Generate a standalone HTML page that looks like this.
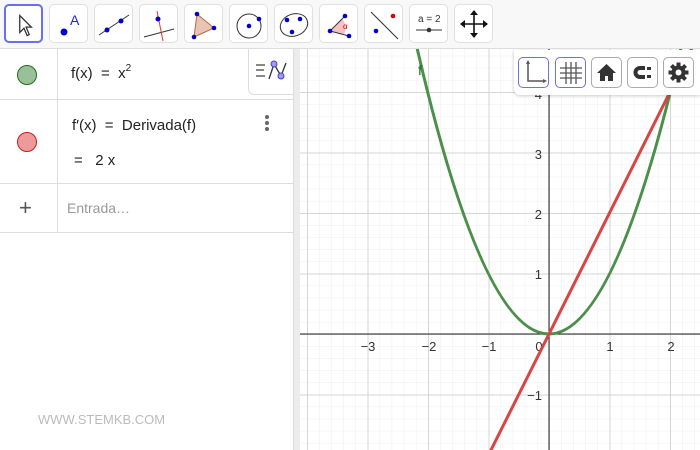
<!DOCTYPE html><html><head><style>
html,body{margin:0;width:700px;height:450px;overflow:hidden}
body{font-family:"Liberation Sans","DejaVu Sans",sans-serif;background:#fff;position:relative}
.tb{position:absolute;left:0;top:0;width:700px;height:48px;background:#f8f8f8;border-bottom:1px solid #ddd;z-index:5}
.b{position:absolute;top:4px;width:37px;height:37px;background:#fff;border:1px solid #e0e0e0;border-radius:5px}
.b svg{width:37px;height:37px;display:block}
.alg{position:absolute;left:0;top:49px;width:293px;height:401px;background:#fff;overflow:hidden}
.div{position:absolute;left:293px;top:49px;width:7px;height:401px;background:#ececec;border-left:1px solid #ddd;box-sizing:border-box}
.row{position:absolute;left:0;width:293px;border-bottom:1px solid #ddd}
.col{position:absolute;left:57px;top:0;bottom:0;border-left:1px solid #ddd}
.dot{position:absolute;left:17px;width:18px;height:18px;border-radius:50%}
.t{position:absolute;font-size:15px;color:#222;line-height:18px}
.sb{position:absolute;left:514px;top:50px;width:186px;height:45px;background:#fff;border-radius:0 0 0 6px;box-shadow:0 1px 3px rgba(0,0,0,.2);z-index:4}
.s{position:absolute;top:7px;width:31px;height:31px;border:1px solid #aaa;border-radius:5px;background:#fff;box-sizing:border-box}
.s svg{width:29px;height:29px;display:block}
</style></head><body>
<div class="tb">
<div class="b" style="left:4px;border:2px solid #6b6ef0;width:35px;height:35px"><svg viewBox="0 0 35 35"><path d="M13 9 L13 25 L17 21 L20 28 L22 27 L19 20 L24 20 Z" fill="#fff" stroke="#333" stroke-width="1.2"/></svg></div>
<div class="b" style="left:49px"><svg viewBox="0 0 37 37"><circle cx="14" cy="27" r="3.5" fill="#0000d0"/><text x="20" y="20" font-size="14" fill="#1a1aff" font-family="Liberation Sans">A</text></svg></div>
<div class="b" style="left:94px"><svg viewBox="0 0 37 37"><line x1="4" y1="30" x2="34" y2="10" stroke="#333"/><circle cx="12" cy="25" r="2.5" fill="#00c"/><circle cx="26" cy="16" r="2.5" fill="#00c"/></svg></div>
<div class="b" style="left:139px"><svg viewBox="0 0 37 37"><line x1="4" y1="32" x2="34" y2="24" stroke="#333"/><line x1="17" y1="6" x2="23" y2="36" stroke="#e33"/><circle cx="18" cy="14" r="2.5" fill="#00c"/></svg></div>
<div class="b" style="left:184px"><svg viewBox="0 0 37 37"><path d="M12 9 L29 23 L9 32 Z" fill="#e8c4b4" stroke="#b76a4a"/><circle cx="12" cy="9" r="2.3" fill="#00c"/><circle cx="29" cy="23" r="2.3" fill="#00c"/><circle cx="9" cy="32" r="2.3" fill="#00c"/></svg></div>
<div class="b" style="left:229px"><svg viewBox="0 0 37 37"><circle cx="19" cy="21" r="12" fill="none" stroke="#333"/><circle cx="19" cy="21" r="2.3" fill="#00c"/><circle cx="29" cy="14" r="2.3" fill="#00c"/></svg></div>
<div class="b" style="left:274px"><svg viewBox="0 0 37 37"><ellipse cx="19" cy="20" rx="14" ry="11" fill="none" stroke="#333" transform="rotate(-20 19 20)"/><circle cx="12" cy="15" r="2.3" fill="#00c"/><circle cx="25" cy="14" r="2.3" fill="#00c"/><circle cx="17" cy="27" r="2.3" fill="#00c"/></svg></div>
<div class="b" style="left:319px"><svg viewBox="0 0 37 37"><path d="M10 26 L22 14 A12 12 0 0 1 24 29 Z" fill="#f4c4c4"/><line x1="10" y1="26" x2="25" y2="11" stroke="#333"/><line x1="10" y1="26" x2="29" y2="31" stroke="#333"/><circle cx="10" cy="26" r="2.3" fill="#00c"/><circle cx="25" cy="11" r="2.3" fill="#00c"/><circle cx="29" cy="31" r="2.3" fill="#00c"/><text x="23" y="24" font-size="8" fill="#e00">α</text></svg></div>
<div class="b" style="left:364px"><svg viewBox="0 0 37 37"><line x1="6" y1="7" x2="33" y2="34" stroke="#333"/><circle cx="28" cy="11" r="2.3" fill="#d00"/><circle cx="11" cy="26" r="2.3" fill="#00c"/></svg></div>
<div class="b" style="left:409px"><svg viewBox="0 0 37 37"><text x="8" y="17" font-size="10" fill="#333">a = 2</text><line x1="6" y1="25" x2="32" y2="25" stroke="#333"/><circle cx="19" cy="25" r="2.3" fill="#333"/></svg></div>
<div class="b" style="left:454px"><svg viewBox="0 0 37 37"><path d="M19 8 V30 M8 19 H30" stroke="#111" stroke-width="1.6"/><path d="M19 5 L15 10 H23Z M19 33 L15 28 H23Z M5 19 L10 15 V23Z M33 19 L28 15 V23Z" fill="#111"/></svg></div>
</div>

<div class="alg">
<div class="row" style="top:0;height:50px"><div class="col"></div><div class="dot" style="top:16px;background:#99c199;border:1px solid #1e6f1e"></div><div class="t" style="left:71px;top:16px">f(x) &nbsp;= &nbsp;x<span style="font-size:10px;position:relative;top:-7px">2</span></div></div>
<div class="row" style="top:51px;height:83px"><div class="col"></div><div class="dot" style="top:32px;background:#ec9a9a;border:1px solid #c81e1e"></div><div class="t" style="left:72px;top:17px">f′(x) &nbsp;= &nbsp;Derivada(f)</div><div class="t" style="left:74px;top:52px">= &nbsp; 2 x</div><div style="position:absolute;left:265px;top:15px;width:4px;font-size:0"><div style="width:4px;height:4px;border-radius:50%;background:#666;margin-bottom:2px"></div><div style="width:4px;height:4px;border-radius:50%;background:#666;margin-bottom:2px"></div><div style="width:4px;height:4px;border-radius:50%;background:#666"></div></div></div>
<div class="row" style="top:135px;height:48px"><div class="col"></div><div style="position:absolute;left:19px;top:15px;font-size:22px;color:#555;line-height:18px">+</div><div class="t" style="left:67px;top:15px;color:#999;font-size:14px">Entrada…</div></div>
<div style="position:absolute;left:248px;top:0;width:45px;height:45px;border:1px solid #ddd;border-top:none;border-right:none;border-radius:0 0 0 6px;background:#fff"><svg width="45" height="45" viewBox="0 0 45 45" style="display:block"><path d="M7 16H16M7 21H15M7 27H16" stroke="#888" stroke-width="2"/><path d="M20 30 L25 15 L32 27 L37 14" fill="none" stroke="#333" stroke-width="1.3"/><circle cx="25" cy="15" r="3" fill="#9a9af0" stroke="#44c"/><circle cx="32" cy="27" r="3" fill="#9a9af0" stroke="#44c"/></svg></div>
<div style="position:absolute;left:38px;top:363px;font-size:13px;color:#bbb">WWW.STEMKB.COM</div>
</div>
<div class="div"></div>

<svg style="position:absolute;left:300px;top:49px;display:block;overflow:hidden" width="400" height="401" viewBox="300 49 400 401">
<defs><pattern id="mi" x="549" y="334" width="12.1" height="12.1" patternUnits="userSpaceOnUse"><path d="M0 0H12.1M0 0V12.1" stroke="#eeeeee" stroke-width="1"/></pattern>
<pattern id="ma" x="549" y="334" width="60.5" height="60.5" patternUnits="userSpaceOnUse"><path d="M0 0H60.5M0 0V60.5" stroke="#d6d6d6" stroke-width="2"/></pattern></defs>
<rect x="300" y="49" width="400" height="401" fill="url(#mi)"/>
<rect x="300" y="49" width="400" height="401" fill="url(#ma)"/>
<line x1="300" y1="334" x2="700" y2="334" stroke="#222" stroke-width="1"/>
<line x1="549" y1="49" x2="549" y2="450" stroke="#222" stroke-width="1"/>
<g font-size="13" fill="#333" font-family="Liberation Sans" text-anchor="middle">
<text x="368" y="351">−3</text><text x="429" y="351">−2</text><text x="489" y="351">−1</text><text x="539" y="351">0</text><text x="610" y="351">1</text><text x="671" y="351">2</text>
</g>
<g font-size="13" fill="#333" font-family="Liberation Sans" text-anchor="end">
<text x="542" y="99">4</text><text x="542" y="159">3</text><text x="542" y="219">2</text><text x="542" y="279">1</text><text x="542" y="400">−1</text>
</g>
<path d="M415 39 Q549 629 683 39" fill="none" stroke="#4a8f4a" stroke-width="3"/>
<line x1="434" y1="564" x2="694" y2="44" stroke="#d94545" stroke-width="3"/>
<text x="418" y="75" font-size="14" fill="#1e6f1e" font-family="Liberation Sans">f</text>
</svg>

<div class="sb">
<div class="s" style="left:4px;border-color:#7070e0"><svg viewBox="0 0 29 29"><path d="M9 4V23H26" stroke="#555" stroke-width="1.5" fill="none"/><path d="M9 2L7 6H11Z M28 23L24 21V25Z" fill="#555"/></svg></div>
<div class="s" style="left:41px;border-color:#7070e0"><svg viewBox="0 0 29 29"><path d="M10 4V26M15 4V26M20 4V26M4 10H26M4 15H26M4 20H26" stroke="#555" stroke-width="1.3"/></svg></div>
<div class="s" style="left:77px"><svg viewBox="0 0 29 29"><path d="M14.5 6L5 15H8V23H13V18H16V23H21V15H24Z" fill="#333"/></svg></div>
<div class="s" style="left:113px"><svg viewBox="0 0 29 29"><path d="M17 8H12A6.5 6.5 0 0 0 12 21H17V17H12A2.5 2.5 0 0 1 12 12H17Z" fill="#333"/><rect x="19" y="9" width="4" height="3" fill="#333"/><rect x="19" y="17" width="4" height="3" fill="#333"/></svg></div>
<div class="s" style="left:149px"><svg viewBox="0 0 29 29"><g fill="#333" transform="translate(14.5 14.5)"><circle r="7"/><rect x="-2" y="-10" width="4" height="20"/><rect x="-2" y="-10" width="4" height="20" transform="rotate(45)"/><rect x="-2" y="-10" width="4" height="20" transform="rotate(90)"/><rect x="-2" y="-10" width="4" height="20" transform="rotate(135)"/></g><circle cx="14.5" cy="14.5" r="3" fill="#fff"/></svg></div>
</div>
</body></html>
